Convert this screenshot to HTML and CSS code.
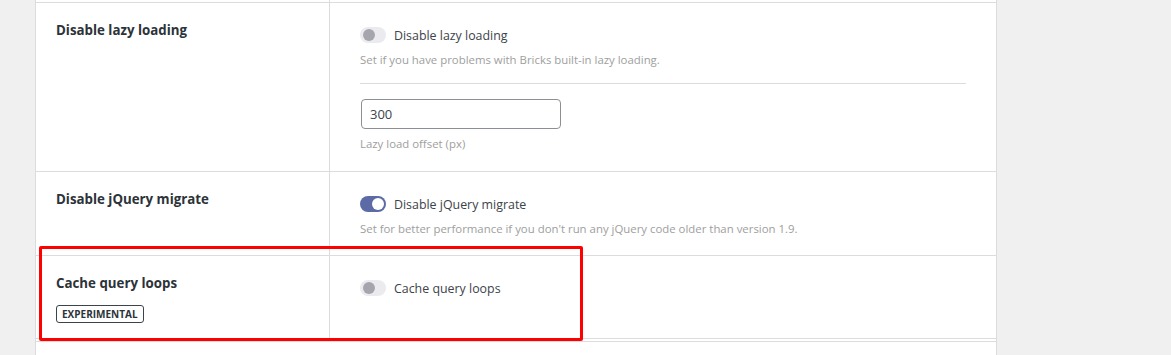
FILE: index.html
```html
<!DOCTYPE html>
<html lang="en">
<head>
    <meta charset="UTF-8">
    <meta name="viewport" content="width=device-width, initial-scale=1.0">
    <title>Bricks settings - Performance</title>
    <link rel="stylesheet" href="styles.css">
</head>
<body>
    <div id="settings">
        <!-- tail of the previous row -->
        <div class="row stub">
            <div class="label"></div>
            <div class="control"></div>
        </div>

        <div class="row lazy">
            <div class="label">
                <h3>Disable lazy loading</h3>
            </div>
            <div class="control">
                <label class="toggle">
                    <span class="switch"></span>
                    <span class="text">Disable lazy loading</span>
                </label>
                <p class="desc">Set if you have problems with Bricks built-in lazy loading.</p>
                <hr>
                <input type="text" class="field" value="300">
                <p class="desc small">Lazy load offset (px)</p>
            </div>
        </div>

        <div class="row jquery">
            <div class="label">
                <h3>Disable jQuery migrate</h3>
            </div>
            <div class="control">
                <label class="toggle">
                    <span class="switch on"></span>
                    <span class="text">Disable jQuery migrate</span>
                </label>
                <p class="desc">Set for better performance if you don't run any jQuery code older than version 1.9.</p>
            </div>
        </div>

        <div class="row cache">
            <div class="label">
                <h3>Cache query loops</h3>
                <span class="badge">Experimental</span>
            </div>
            <div class="control">
                <label class="toggle">
                    <span class="switch"></span>
                    <span class="text">Cache query loops</span>
                </label>
            </div>
        </div>

        <div class="row stub">
            <div class="label"></div>
            <div class="control"></div>
        </div>
    </div>

    <!-- highlight drawn over the screenshot -->
    <div id="highlight"></div>
</body>
</html>
```

FILE: styles.css
```css
body {
    margin: 0;
    background-color: #f0f0f0;
    font-family: "Open Sans", "Liberation Sans", sans-serif;
    color: #3c434a;
}
#settings {
    width: 960px;
    margin-left: 35px;
    background-color: #fff;
    border-left: 1px solid #dcdcde;
    border-right: 1px solid #dcdcde;
    height: 355px;
    overflow: hidden;
}
.row {
    display: grid;
    grid-template-columns: 294px 1fr;
    border-bottom: 1px solid #dcdcde;
}
.row.stub {
    height: 2px;
}
.label {
    border-right: 1px solid #dcdcde;
    padding-left: 20px;
}
.control {
    padding-left: 30px;
}
h3 {
    margin: 0;
    font-size: 13.3px;
    font-weight: 700;
    line-height: 20px;
    color: #2c3338;
}
.lazy {
    height: 168px;
}
.lazy h3 {
    margin-top: 17px;
}
.lazy .control {
    padding-top: 23px;
}
.jquery {
    height: 83px;
}
.jquery h3 {
    margin-top: 17px;
}
.jquery .control {
    padding-top: 23px;
}
.cache {
    height: 82px;
}
.cache h3 {
    margin-top: 17px;
}
.cache .control {
    padding-top: 23px;
}
.toggle {
    display: flex;
    align-items: center;
    height: 18px;
}
.switch {
    position: relative;
    width: 26px;
    height: 16px;
    border-radius: 8px;
    background-color: #ebebef;
    margin-right: 8px;
}
.switch::after {
    content: "";
    position: absolute;
    top: 2px;
    left: 3px;
    width: 12px;
    height: 12px;
    border-radius: 50%;
    background-color: #a5a5ae;
}
.switch.on {
    background-color: #5c6aa6;
}
.switch.on::after {
    left: 12px;
    background-color: #fff;
}
.text {
    font-size: 12.4px;
    color: #3c434a;
}
.desc {
    margin: 8px 0 0;
    font-size: 11.4px;
    line-height: 16px;
    color: #9e9e9e;
}
hr {
    border: 0;
    border-top: 1px solid #dcdcde;
    margin: 15px 30px 15px 0;
}
.field {
    display: block;
    width: 200px;
    height: 30px;
    box-sizing: border-box;
    margin-left: 1px;
    padding: 0 8px;
    border: 1px solid #8c8f94;
    border-radius: 4px;
    font-family: inherit;
    font-size: 13px;
    color: #3c434a;
}
.desc.small {
    margin-top: 7px;
}
.badge {
    display: inline-block;
    margin-top: 12px;
    padding: 0 5px;
    border: 1px solid #3c434a;
    border-radius: 3px;
    font-size: 10px;
    font-weight: 700;
    line-height: 16px;
    text-transform: uppercase;
    color: #2c3338;
}
#highlight {
    position: absolute;
    left: 39px;
    top: 246px;
    width: 538px;
    height: 89px;
    border: 3px solid #f00;
    border-radius: 2px;
}
```
